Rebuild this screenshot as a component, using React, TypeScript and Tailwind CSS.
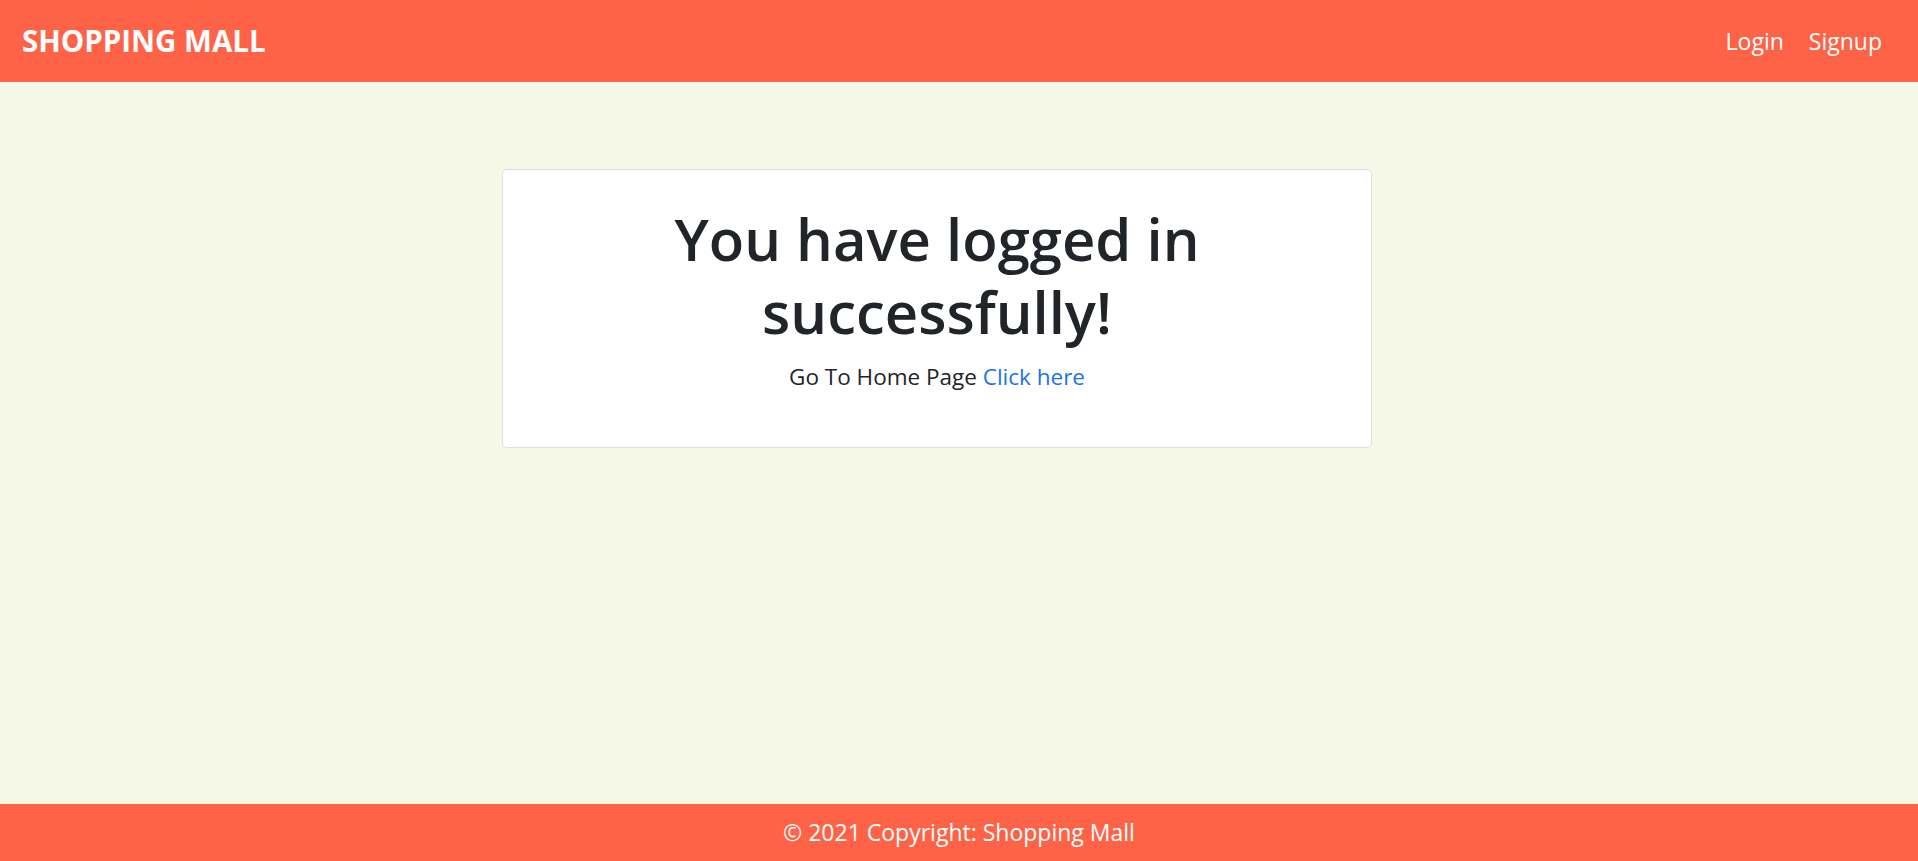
import React from 'react';

const font = { fontFamily: '"Open Sans", "Noto Sans", sans-serif' };

const Navbar: React.FC = () => (
  <header className="h-[82px] shrink-0 bg-[#ff6347] flex items-center justify-between pl-[22px] pr-[36px] text-white">
    <a href="#" className="text-[29.5px] font-bold">SHOPPING MALL</a>
    <nav className="flex items-center gap-[25px] text-[23px]">
      <a href="#">Login</a>
      <a href="#">Signup</a>
    </nav>
  </header>
);

const Footer: React.FC = () => (
  <footer className="h-[57px] shrink-0 bg-[#ff6347] flex items-center justify-center text-white text-[23px]">
    © 2021 Copyright: Shopping Mall
  </footer>
);

export default function App() {
  return (
    <div className="min-h-screen flex flex-col bg-[#f5f8e7]" style={font}>
      <Navbar />
      <main className="flex-1">
        <div className="w-[870px] h-[279px] ml-[502px] mt-[87px] bg-white border border-[#dfdfdf] rounded-[5px] pt-[32px] text-center text-[#212529]">
          <h1 className="w-[640px] mx-auto text-[58px] leading-[73px] font-semibold">
            You have logged in successfully!
          </h1>
          <p className="mt-[12px] text-[22.5px]">
            Go To Home Page <a href="#" className="text-[#1a73e8]">Click here</a>
          </p>
        </div>
      </main>
      <Footer />
    </div>
  );
}
